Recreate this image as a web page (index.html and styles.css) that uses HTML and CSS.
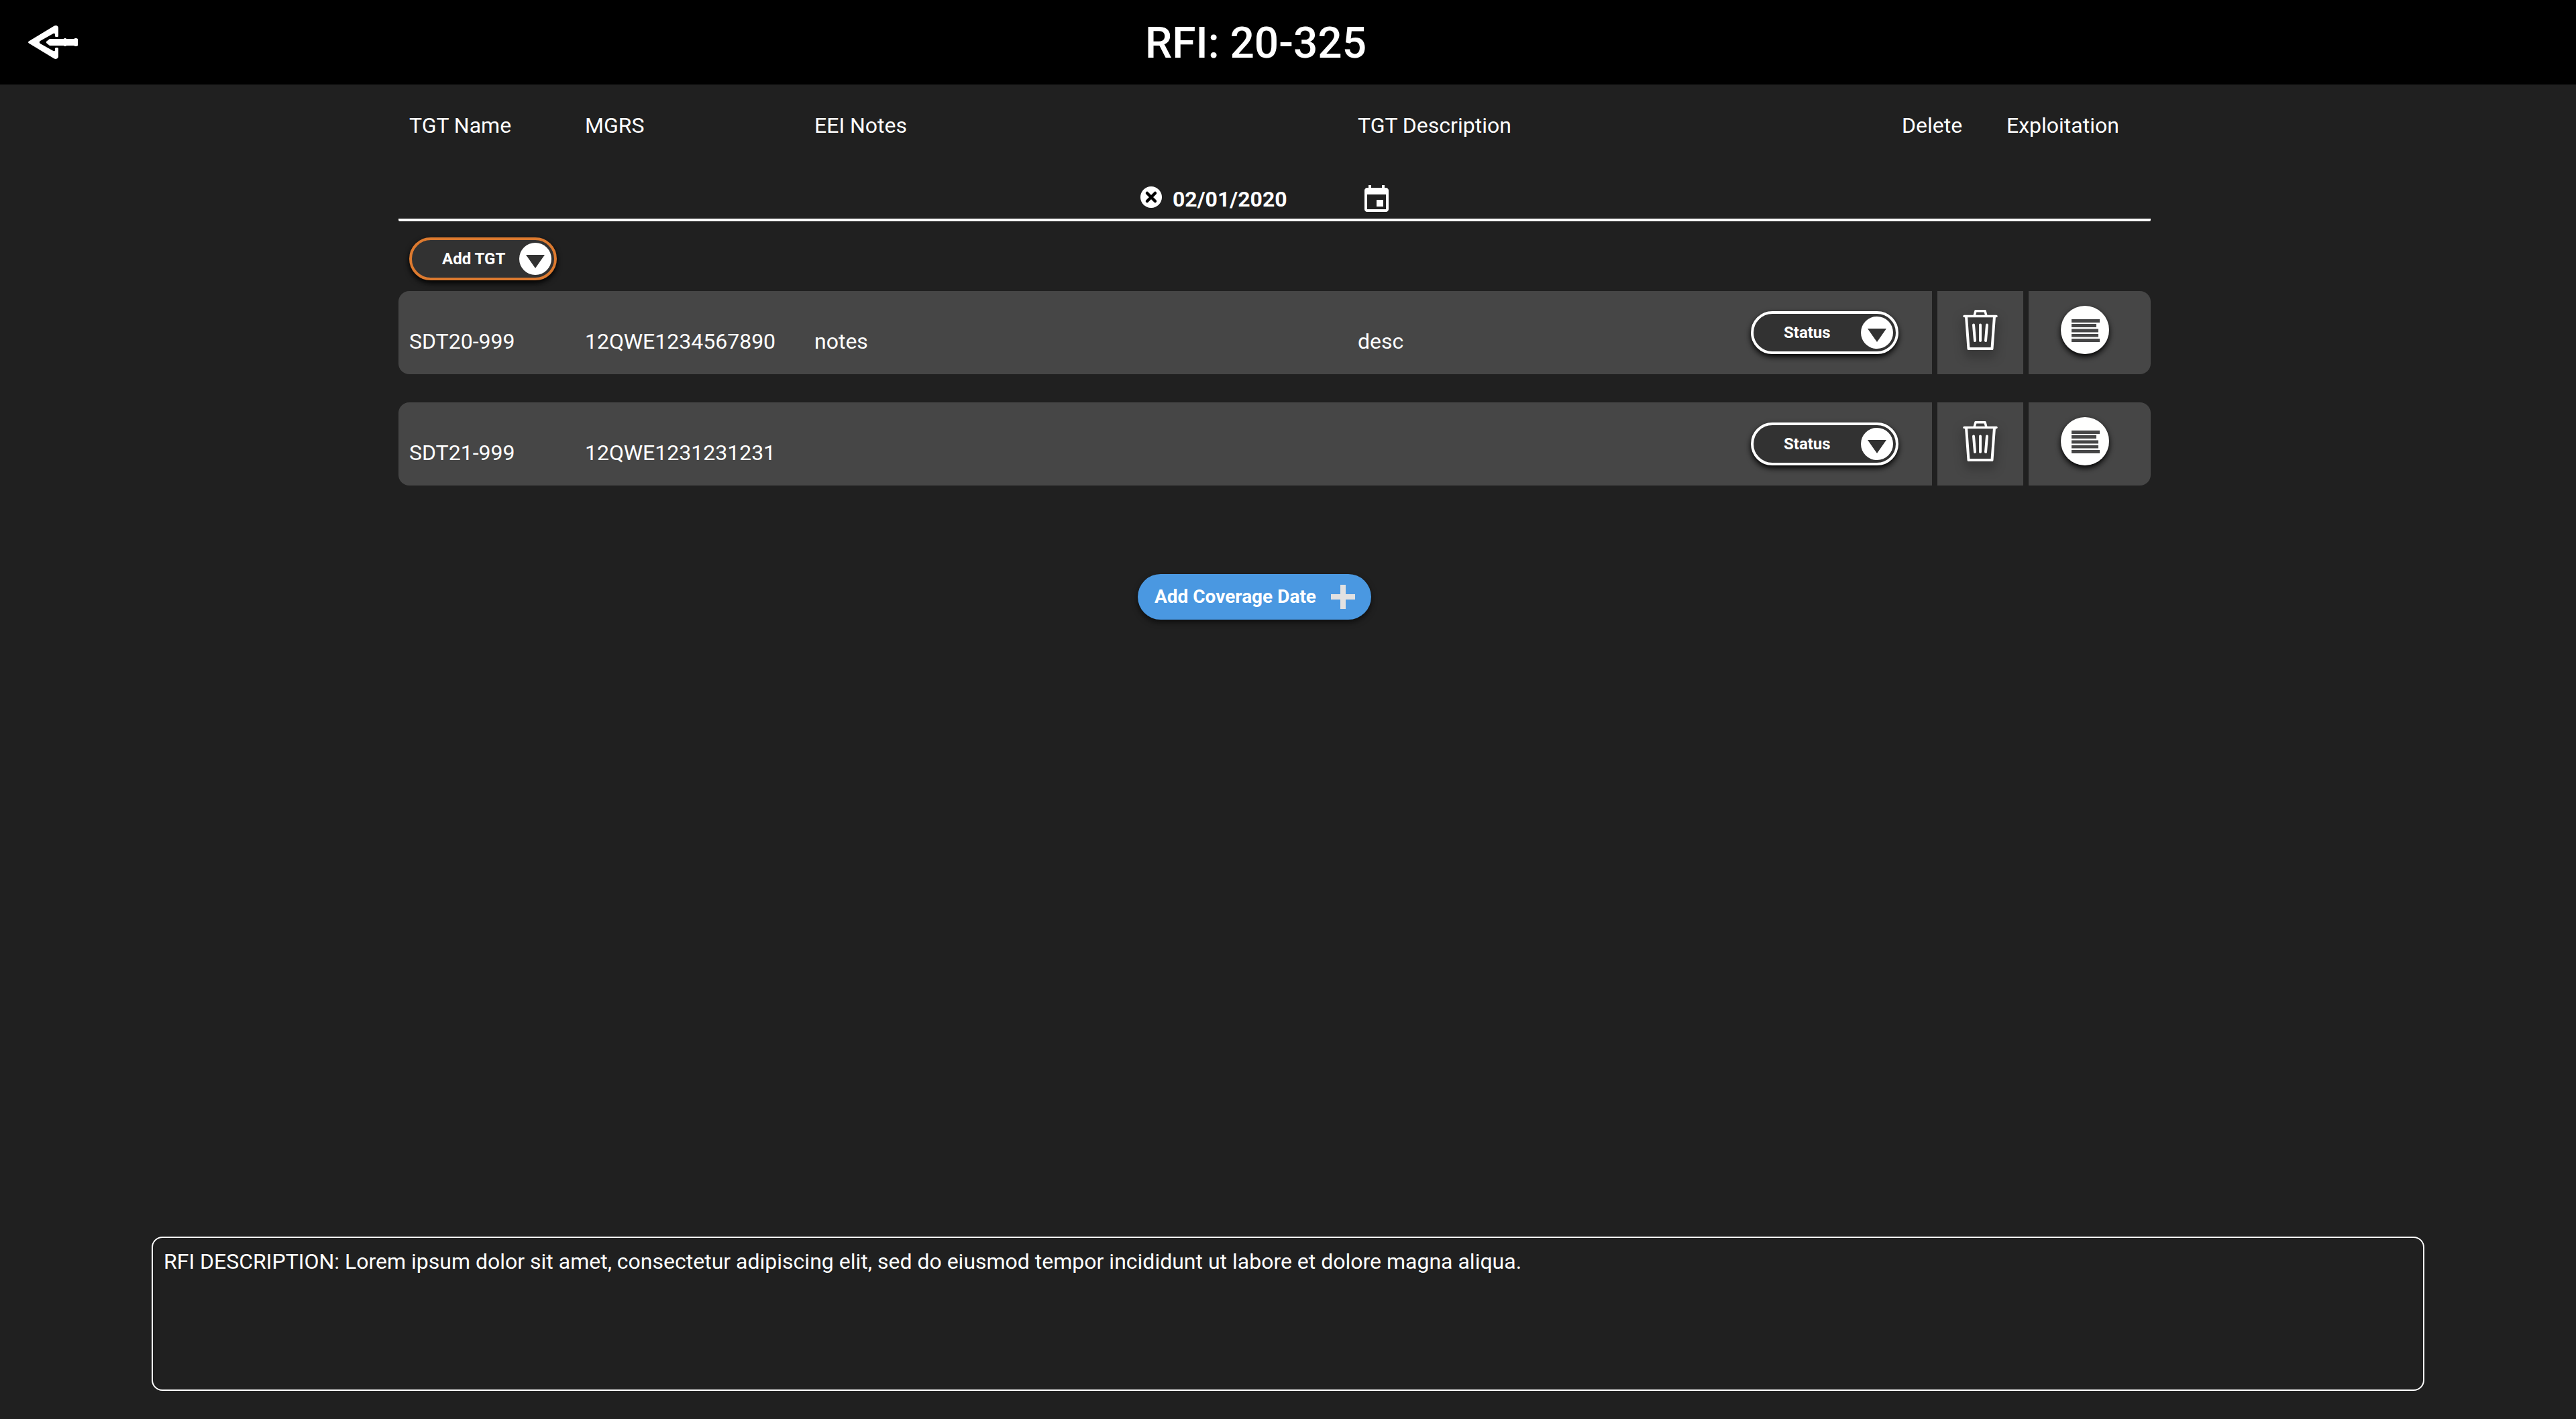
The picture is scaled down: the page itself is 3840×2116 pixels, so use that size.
FILE: index.html
```html
<!DOCTYPE html>
<html lang="en">
<head>
<meta charset="utf-8">
<title>RFI: 20-325</title>
<link rel="stylesheet" href="styles.css">
</head>
<body>
<svg class="sprite" aria-hidden="true">
  <symbol id="caret" viewBox="0 0 48 48">
    <circle cx="24" cy="24" r="24" fill="#fff"/>
    <path d="M10 18h28L24 38z" fill="#323232"/>
  </symbol>
  <symbol id="trash" viewBox="0 0 52 60">
    <g fill="none" stroke="#fff" stroke-width="3.500" stroke-linecap="round" stroke-linejoin="round">
      <path d="M2 9.500H50"/>
      <path d="M17 9L19 1.800H33L35 9"/>
      <path d="M5 10L8.500 58H43.500L47 10" stroke-width="4"/>
      <path d="M16 22.500L18 46M26 22.500V46M36 22.500L34 46" stroke-width="4"/>
    </g>
  </symbol>
  <symbol id="notes" viewBox="0 0 72 72">
    <circle cx="36" cy="36" r="36" fill="#fffffe"/>
    <path d="M16 20H58V25H16zM16 27H53V32H16zM16 34.500H56V39.500H16zM16 42H56V46.500H16zM16 49H58V54H16z" fill="#464646"/>
  </symbol>
</svg>

<header class="topbar">
  <a class="back" href="#" aria-label="Back">
    <svg viewBox="0 0 74 50" width="74" height="50">
      <g fill="#fff">
        <path d="M1 23.500L38.500 .8C42 -1 45 1 45 4V15.500Q45 17 43.500 17H41.500Q40 17 40 15.500V13.500Q40 10.800 37.500 12L18 23Q15.500 25 18 27L37.500 38Q40 39.200 40 36.500V34.500Q40 33 41.500 33H43.500Q45 33 45 34.500V46C45 49 42 51 38.500 49.200L1 26.500Q-1 25 1 23.500z"/>
        <path d="M27 24L32 20H53L54 19H56L57 20H68L70 19H72L74 20V30L72 31H70L68 30H57L56 31H54L53 30H32L27 26z"/>
      </g>
    </svg>
  </a>
  <h1 class="title">RFI: 20-325</h1>
</header>

<main class="content">
  <table class="targets">
    <thead>
      <tr class="head-row">
        <th scope="col">TGT Name</th>
        <th scope="col">MGRS</th>
        <th scope="col">EEI Notes</th>
        <th scope="col">TGT Description</th>
        <th scope="col">Delete</th>
        <th scope="col">Exploitation</th>
      </tr>
    </thead>
    <tbody>
      <tr class="date-row">
        <td class="date-cell" colspan="6">
          <button class="icon-button clear" type="button" aria-label="Remove coverage date">
            <svg viewBox="0 0 32 32" width="32" height="32">
              <circle cx="16" cy="16" r="16" fill="#fff"/>
              <path d="M10 10L22 22M22 10L10 22" stroke="#000" stroke-width="4.500" stroke-linecap="round"/>
            </svg>
          </button>
          <input class="date" type="text" value="02/01/2020" aria-label="Coverage date">
          <button class="icon-button" type="button" aria-label="Open calendar">
            <svg viewBox="0 0 24 24" width="48" height="48">
              <path fill="#fff" d="M17 12h-5v5h5v-5zM16 1v2H8V1H6v2H5c-1.110 0-1.990.9-1.990 2L3 19c0 1.100.89 2 2 2h14c1.100 0 2-.9 2-2V5c0-1.100-.9-2-2-2h-1V1h-2zm3 18H5V8h14v11z"/>
            </svg>
          </button>
        </td>
      </tr>
      <tr class="add-row">
        <td colspan="6">
          <button class="pill pill-add" type="button">Add TGT<svg width="48" height="48"><use href="#caret"/></svg></button>
        </td>
      </tr>
      <tr class="target-row">
        <td class="cell">SDT20-999</td>
        <td class="cell">12QWE1234567890</td>
        <td class="cell">notes</td>
        <td class="cell">desc</td>
        <td class="cell cell-status"><button class="pill" type="button">Status<svg width="48" height="48"><use href="#caret"/></svg></button></td>
        <td class="cell cell-delete"><button class="icon-button" type="button" aria-label="Delete SDT20-999"><svg class="trash" width="52" height="60"><use href="#trash"/></svg></button></td>
        <td class="cell cell-exploit"><button class="icon-button round" type="button" aria-label="Exploitation of SDT20-999"><svg width="72" height="72"><use href="#notes"/></svg></button></td>
      </tr>
      <tr class="target-row">
        <td class="cell">SDT21-999</td>
        <td class="cell">12QWE1231231231</td>
        <td class="cell"></td>
        <td class="cell"></td>
        <td class="cell cell-status"><button class="pill" type="button">Status<svg width="48" height="48"><use href="#caret"/></svg></button></td>
        <td class="cell cell-delete"><button class="icon-button" type="button" aria-label="Delete SDT21-999"><svg class="trash" width="52" height="60"><use href="#trash"/></svg></button></td>
        <td class="cell cell-exploit"><button class="icon-button round" type="button" aria-label="Exploitation of SDT21-999"><svg width="72" height="72"><use href="#notes"/></svg></button></td>
      </tr>
    </tbody>
  </table>
  <div class="coverage">
    <button class="add-date" type="button">Add Coverage Date
      <svg viewBox="0 0 36 36" width="36" height="36"><path d="M14 0h8v14h14v8H22v14h-8V22H0v-8h14z" fill="#e1e1e1"/></svg>
    </button>
  </div>
</main>

<section class="description">
  <p>RFI DESCRIPTION: Lorem ipsum dolor sit amet, consectetur adipiscing elit, sed do eiusmod tempor incididunt ut labore et dolore magna aliqua.</p>
</section>
</body>
</html>
```
FILE: styles.css
```css
* {
  box-sizing: border-box;
}

body {
  display: flex;
  flex-direction: column;
  min-height: 100vh;
  margin: 0;
  background: #202020;
  color: #fff;
  font: 32px/38px Roboto, sans-serif;
}

.sprite {
  display: none;
}

button,
input {
  margin: 0;
  padding: 0;
  border: 0;
  background: none;
  color: inherit;
  font: inherit;
}

svg {
  display: block;
  flex: none;
}

/* Top bar */
.topbar {
  display: grid;
  grid-template-columns: 116px 1fr 116px;
  align-items: center;
  padding: 0 96px 0 0;
  min-height: 126px;
  background: #000;
}

.back {
  justify-self: end;
}

.title {
  margin: 0;
  padding-top: 4px;
  font-size: 64px;
  font-weight: 500;
  line-height: 76px;
  text-align: center;
}

/* Target table */
.content {
  display: grid;
  grid-template-columns: 297fr 1306fr 317fr;
  padding: 42px 0;
}

.content > * {
  grid-column: 2;
}

.targets,
.targets thead,
.targets tbody {
  display: block;
}

.head-row {
  display: grid;
  grid-template-columns: 278fr 342fr 810fr 811fr 156px 215px;
}

.head-row th {
  padding: 0;
  font-weight: 400;
  text-align: left;
}

.head-row th:first-child {
  padding-left: 16px;
}

.date-row,
.add-row {
  display: block;
}

.date-cell {
  display: flex;
  align-items: center;
  justify-content: center;
  padding: 68px 24px 4px 0;
  border-bottom: 4px solid #fff;
  border-radius: 2px;
}

.clear {
  margin: 0 16px 8px 0;
}

.date {
  width: 280px;
  height: 40px;
  padding-bottom: 2px;
  font-weight: 700;
}

.add-row td {
  display: block;
  padding: 24px 16px 16px;
}

.target-row {
  display: grid;
  grid-template-columns: 278fr 342fr 810fr 586fr 270px 136px 190px;
}

.target-row + .target-row {
  margin-top: 42px;
}

.cell {
  display: flex;
  align-items: flex-end;
  min-height: 124px;
  padding: 0 0 30px;
  background: #464646;
}

.cell:first-child {
  padding-left: 16px;
  border-radius: 16px 0 0 16px;
}

.cell-delete,
.cell-exploit {
  justify-content: center;
  margin-left: 8px;
}

.cell-delete {
  padding-bottom: 36px;
}

.cell-exploit {
  padding-right: 14px;
  border-radius: 0 16px 16px 0;
}

/* Buttons */
.icon-button {
  display: block;
}

.trash {
  overflow: visible;
  filter: drop-shadow(0 8px 8px rgba(0, 0, 0, 0.6));
}

.round {
  border-radius: 50%;
  box-shadow: 0 4px 8px #000;
}

.pill {
  display: flex;
  align-items: center;
  justify-content: space-between;
  width: 220px;
  height: 64px;
  padding: 0 4px 0 45px;
  border: 4px solid #fff;
  border-radius: 32px;
  background: #323232;
  box-shadow: 0 4px 8px #000;
  font-size: 24px;
  font-weight: 700;
  line-height: 28px;
}

.pill-add {
  border-color: #dd7a2f;
}

.coverage {
  display: flex;
  justify-content: center;
  padding: 132px 60px 0 0;
}

.add-date {
  display: flex;
  align-items: center;
  justify-content: space-between;
  width: 348px;
  height: 68px;
  padding: 0 24px 0 25px;
  border-radius: 34px;
  background: #4a98e1;
  box-shadow: 0 4px 8px rgba(0, 0, 0, 0.6);
  font-size: 28px;
  font-weight: 700;
  line-height: 32px;
}

/* Request description */
.description {
  min-height: 230px;
  margin: auto 226px 42px;
  padding: 16px;
  border: 2px solid #fff;
  border-radius: 16px;
}

.description p {
  margin: 0;
}
```
